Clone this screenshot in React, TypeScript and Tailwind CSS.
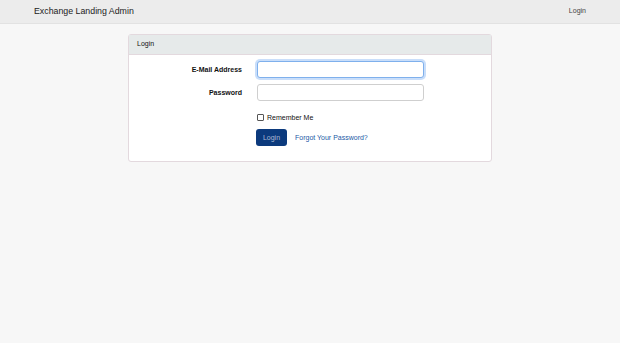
export default function App() {
  return (
    <div className="min-h-[343px] bg-[#f7f7f7] font-['Liberation_Sans',Arial,sans-serif]">
      <nav className="flex h-6 items-center justify-between border-b border-[#e2e2e2] bg-[#ececec] pl-[34px] pr-[34px]">
        <span className="text-[8.8px] text-[#222]">Exchange Landing Admin</span>
        <a className="text-[7px] text-[#444]">Login</a>
      </nav>

      <div className="mx-auto mt-[10px] w-[364px] rounded-[3px] border border-[#e3d9de] bg-white">
        <div className="flex h-[20px] items-center border-b border-[#e3d9de] bg-[#e6eaea] px-[8px] text-[7px] text-[#111]">
          Login
        </div>
        <div className="px-2 pt-[6px] pb-[15px] leading-none">
          <div className="flex items-center">
            <label className="w-[105px] text-right text-[7px] font-bold text-[#111]">E-Mail Address</label>
            <input
              type="email"
              autoFocus
              className="ml-[15px] block h-[17px] w-[167px] rounded-[3px] border border-[#7fb0ec] bg-white px-1 text-[7px] shadow-[0_0_0_2px_rgba(100,160,240,0.35)] outline-none"
            />
          </div>
          <div className="mt-[6px] flex items-center">
            <label className="w-[105px] text-right text-[7px] font-bold text-[#111]">Password</label>
            <input
              type="password"
              className="ml-[15px] block h-[17px] w-[167px] rounded-[3px] border border-[#cfcfcf] bg-white px-1 text-[7px] outline-none"
            />
          </div>
          <div className="mt-[12px] flex h-[8px] items-center pl-[120px]">
            <span className="h-[7px] w-[7px] rounded-[1px] border border-[#555] bg-white" />
            <span className="ml-[3px] text-[7px] text-[#111]">Remember Me</span>
          </div>
          <div className="mt-[8px] flex items-center pl-[119px]">
            <button className="h-[17px] w-[31px] rounded-[3px] bg-[#0c3a7d] text-[7px] text-[#a9b9d4]">Login</button>
            <a className="ml-[8px] text-[7px] text-[#1b5aa6]">Forgot Your Password?</a>
          </div>
        </div>
      </div>
    </div>
  );
}
